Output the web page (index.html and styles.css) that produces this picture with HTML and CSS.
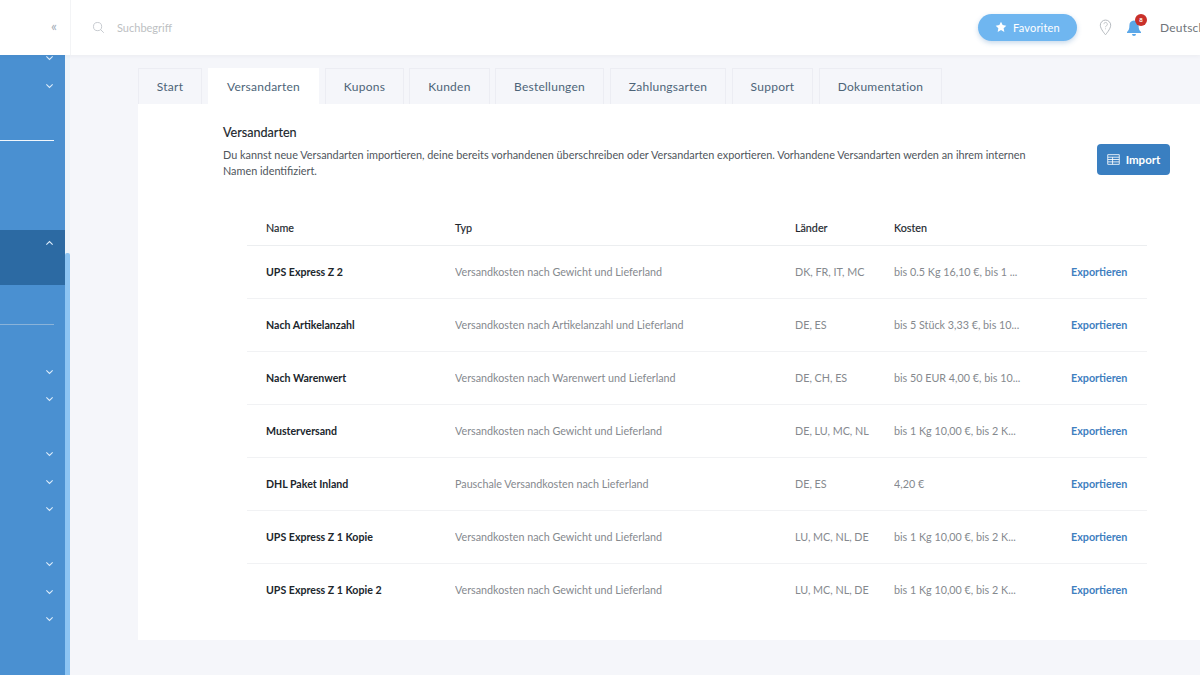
FILE: index.html
```html
<!DOCTYPE html>
<html lang="de">
<head>
<meta charset="utf-8">
<title>Versandarten</title>
<link rel="stylesheet" href="styles.css">
</head>
<body>
<svg class="sprite" width="0" height="0" aria-hidden="true">
  <symbol id="chev" viewBox="0 0 10 6"><path d="M1.500 1.200 5 4.600l3.500-3.400" fill="none" stroke="currentColor" stroke-width="1.200"/></symbol>
</svg>
<div class="app">
  <header class="topbar">
    <div class="brand"><span class="collapse">«</span></div>
    <div class="search">
      <svg class="search-icon" viewBox="0 0 14 14"><circle cx="6" cy="6" r="4.400" fill="none" stroke="#bcc0c6" stroke-width=".9"/><path d="m9.300 9.300 3.400 3.400" stroke="#bcc0c6" stroke-width=".9"/></svg>
      <span>Suchbegriff</span>
    </div>
    <div class="actions">
      <button class="fav"><svg viewBox="0 0 14 14"><path d="m7 .8 1.900 4 4.300.6-3.100 3 .8 4.300L7 10.600l-3.900 2.100.8-4.300-3.100-3 4.300-.6z" fill="#fff"/></svg>Favoriten</button>
      <svg class="pin" viewBox="0 0 14 18"><path d="M7 1a5.600 5.600 0 0 0-5.600 5.600C1.400 10.500 7 16.800 7 16.800s5.600-6.300 5.600-10.200A5.600 5.600 0 0 0 7 1z" fill="none" stroke="#aeb3b9"/><path d="M5.200 5.400a1.900 1.900 0 1 1 2.900 1.700c-.7.400-1.100.8-1.100 1.600M7 10v.9" fill="none" stroke="#aeb3b9" stroke-width=".8"/></svg>
      <div class="bell">
        <svg viewBox="0 0 16 18"><path d="M8 1.500c-3 0-4.600 2.200-4.600 5 0 3.200-.7 5-2.400 6.500v1h14v-1c-1.700-1.500-2.400-3.300-2.400-6.500 0-2.800-1.600-5-4.600-5zM6 15h4a2 2 0 0 1-4 0z" fill="#5ba7e8"/></svg>
        <span class="badge">8</span>
      </div>
      <span class="lang">Deutsch</span>
    </div>
  </header>
  <div class="body">
    <aside class="sidebar">
      <div class="nav">
        <div class="nav-item first"><svg><use href="#chev"/></svg></div>
        <div class="nav-item"><svg><use href="#chev"/></svg></div>
        <hr class="rule bright">
        <div class="active">
          <div class="nav-item"><svg class="up"><use href="#chev"/></svg></div>
        </div>
        <hr class="rule dim">
        <div class="nav-item g1"><svg><use href="#chev"/></svg></div>
        <div class="nav-item"><svg><use href="#chev"/></svg></div>
        <div class="nav-item g2"><svg><use href="#chev"/></svg></div>
        <div class="nav-item"><svg><use href="#chev"/></svg></div>
        <div class="nav-item"><svg><use href="#chev"/></svg></div>
        <div class="nav-item g2"><svg><use href="#chev"/></svg></div>
        <div class="nav-item"><svg><use href="#chev"/></svg></div>
        <div class="nav-item"><svg><use href="#chev"/></svg></div>
      </div>
      <div class="track"><div class="thumb"></div></div>
    </aside>
    <main class="main">
      <nav class="tabs">
        <a class="tab t-start">Start</a>
        <a class="tab t-ship is-active">Versandarten</a>
        <a class="tab t-coupon">Kupons</a>
        <a class="tab t-cust">Kunden</a>
        <a class="tab t-order">Bestellungen</a>
        <a class="tab t-pay">Zahlungsarten</a>
        <a class="tab t-support">Support</a>
        <a class="tab t-docs">Dokumentation</a>
      </nav>
      <section class="panel">
        <div class="intro">
          <div class="intro-text">
            <h1>Versandarten</h1>
            <p>Du kannst neue Versandarten importieren, deine bereits vorhandenen überschreiben oder Versandarten exportieren. Vorhandene Versandarten werden an ihrem internen Namen identifiziert.</p>
          </div>
          <button class="import"><svg viewBox="0 0 14 12"><path d="M.7.700h12.600v10.600H.7zM.7 3.500h12.600M.7 6h12.600M.7 8.600h12.600M6 3.500v7.800" fill="none" stroke="#fff" stroke-width=".9"/></svg>Import</button>
        </div>
        <table class="grid">
          <colgroup><col class="c1"><col class="c2"><col class="c3"><col class="c4"><col></colgroup>
          <thead><tr><th>Name</th><th>Typ</th><th>Länder</th><th>Kosten</th><th></th></tr></thead>
          <tbody>
            <tr><td class="name">UPS Express Z 2</td><td>Versandkosten nach Gewicht und Lieferland</td><td>DK, FR, IT, MC</td><td>bis 0.5 Kg 16,10 €, bis 1 ...</td><td class="link">Exportieren</td></tr>
            <tr><td class="name">Nach Artikelanzahl</td><td>Versandkosten nach Artikelanzahl und Lieferland</td><td>DE, ES</td><td>bis 5 Stück 3,33 €, bis 10...</td><td class="link">Exportieren</td></tr>
            <tr><td class="name">Nach Warenwert</td><td>Versandkosten nach Warenwert und Lieferland</td><td>DE, CH, ES</td><td>bis 50 EUR 4,00 €, bis 10...</td><td class="link">Exportieren</td></tr>
            <tr><td class="name">Musterversand</td><td>Versandkosten nach Gewicht und Lieferland</td><td>DE, LU, MC, NL</td><td>bis 1 Kg 10,00 €, bis 2 K...</td><td class="link">Exportieren</td></tr>
            <tr><td class="name">DHL Paket Inland</td><td>Pauschale Versandkosten nach Lieferland</td><td>DE, ES</td><td>4,20 €</td><td class="link">Exportieren</td></tr>
            <tr><td class="name">UPS Express Z 1 Kopie</td><td>Versandkosten nach Gewicht und Lieferland</td><td>LU, MC, NL, DE</td><td>bis 1 Kg 10,00 €, bis 2 K...</td><td class="link">Exportieren</td></tr>
            <tr><td class="name">UPS Express Z 1 Kopie 2</td><td>Versandkosten nach Gewicht und Lieferland</td><td>LU, MC, NL, DE</td><td>bis 1 Kg 10,00 €, bis 2 K...</td><td class="link">Exportieren</td></tr>
          </tbody>
        </table>
      </section>
    </main>
  </div>
</div>
</body>
</html>
```

FILE: styles.css
```css
* { box-sizing: border-box; }
html, body { margin: 0; height: 100%; overflow: hidden; }
body { font-family: "Lato", "Open Sans", sans-serif; color: #1e2a33; background: #f5f6fa; }
.sprite { position: absolute; }
.app { width: 1200px; height: 675px; display: flex; flex-direction: column; overflow: hidden; }

.topbar { flex: 0 0 55px; background: #fff; display: flex; align-items: center; box-shadow: 0 1px 4px rgba(60,70,90,.06); z-index: 2; }
.brand { flex: 0 0 71px; height: 100%; border-right: 1px solid #f3f4f6; display: flex; align-items: center; justify-content: flex-end; padding-right: 13px; }
.collapse { color: #a3adb8; font-size: 14px; line-height: 1; margin-top: -3px; }
.search { flex: 1; display: flex; align-items: center; padding-left: 21px; color: #bdbfc3; font-size: 11px; }
.search-icon { width: 13px; height: 13px; margin-right: 12px; margin-top: -1px; }
.actions { display: flex; align-items: center; width: 222px; flex: 0 0 222px; white-space: nowrap; }
.fav { flex: none; width: 99px; height: 27px; border: 0; border-radius: 14px; background: #6fb6f0; color: #fff; font: 11px "Lato", sans-serif; letter-spacing: .2px; display: flex; align-items: center; justify-content: center; gap: 6px; box-shadow: 0 2px 5px rgba(70,130,190,.3); padding: 0 0 1px; }
.fav svg { width: 12px; height: 12px; }
.pin { flex: none; width: 13px; height: 17px; margin-left: 22px; }
.bell { position: relative; flex: none; width: 16px; height: 18px; margin-left: 14px; }
.bell svg { width: 16px; height: 18px; display: block; }
.badge { position: absolute; top: -5px; left: 9px; width: 12px; height: 12px; border-radius: 50%; background: #c9302a; color: #fff; font-size: 6px; line-height: 12px; text-align: center; font-weight: 700; }
.lang { margin-left: 18px; color: #70757b; font-size: 12px; letter-spacing: .2px; }

.body { flex: 1; display: flex; min-height: 0; }
.sidebar { flex: 0 0 70px; display: flex; overflow: hidden; }
.nav { flex: 0 0 65px; background: #4a90d1; display: flex; flex-direction: column; }
.nav-item { flex: 0 0 27.5px; height: 27.5px; display: flex; align-items: center; justify-content: flex-end; padding-right: 11px; color: #dcecfa; }
.nav-item svg { width: 9px; height: 6px; }
.nav-item svg.up { transform: rotate(180deg); }
.nav-item.first { margin-top: -10.5px; }
.rule { border: 0; height: 1px; margin: 0; width: 54px; }
.rule.bright { background: #f2f7fc; margin-top: 40px; }
.rule.dim { background: #8ab3d9; margin-top: 39px; }
.active { margin-top: 89px; height: 55px; background: #2c6aa3; flex: 0 0 55px; }
.g1 { margin-top: 33.5px; }
.g2 { margin-top: 27.5px; }
.track { flex: 0 0 5px; background: #ecf4fb; padding-top: 198px; }
.thumb { height: 100%; background: #8cc4f3; border-radius: 2px 2px 0 0; }

.main { flex: 1; padding: 13px 0 35px 68px; display: flex; flex-direction: column; min-width: 0; }
.tabs { display: flex; height: 36px; flex: 0 0 36px; gap: 6px; }
.tab { flex: none; height: 36px; display: flex; align-items: center; justify-content: center; border: 1px solid #ecedf3; border-bottom: 0; padding-bottom: 1px; color: #4d6478; font-size: 12px; letter-spacing: .25px; background: #f5f6fa; }
.tab.is-active { background: #fff; border-color: #fff; color: #4d6478; }
.t-start { width: 64px; }
.t-ship { width: 111px; }
.t-coupon { width: 79px; }
.t-cust { width: 81px; margin-left: -1px; }
.t-order { width: 109px; margin-left: -1px; }
.t-pay { width: 116px; }
.t-support { width: 81px; }
.t-docs { width: 123px; }

.panel { flex: 1; background: #fff; padding: 20px 30px 0 85px; }
.intro { display: flex; justify-content: space-between; align-items: flex-start; height: 78px; }
.intro-text { width: 812px; }
h1 { margin: 0; font-size: 12.6px; font-weight: 400; line-height: 17px; color: #20262c; -webkit-text-stroke: .15px #20262c; }
p { margin: 6px 0 0; font-size: 10.85px; line-height: 15.5px; color: #4f565c; }
.import { margin-top: 20px; width: 73px; height: 31px; border: 0; border-radius: 4px; background: #3a7fc1; color: #fff; font: 700 11.5px "Lato", sans-serif; display: flex; align-items: center; justify-content: center; gap: 6px; padding: 0; }
.import svg { width: 13px; height: 11px; }

.grid { width: 900px; margin-left: 24px; border-collapse: collapse; table-layout: fixed; font-size: 10.75px; }
.c1 { width: 208px; }
.c2 { width: 340px; }
.c3 { width: 99px; }
.c4 { width: 177px; }
th { height: 43px; padding: 9px 0 0; text-align: left; font-weight: 400; color: #20262c; border-bottom: 1px solid #eceef0; -webkit-text-stroke: .15px #20262c; }
td { height: 53px; padding: 0; color: #85898e; border-bottom: 1px solid #f1f2f4; white-space: nowrap; overflow: hidden; }
tr:last-child td { border-bottom: 0; }
th:first-child, td.name { padding-left: 19px; }
td.name { color: #20262c; font-weight: 700; font-size: 10.6px; }
td.link { color: #3f80bf; font-weight: 700; }
```
